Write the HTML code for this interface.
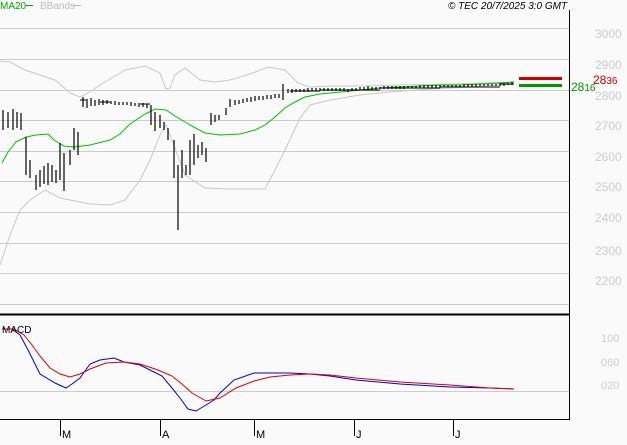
<!DOCTYPE html>
<html><head><meta charset="utf-8"><style>
body{margin:0;background:#fafafa;width:627px;height:440px;overflow:hidden;font-family:"Liberation Sans",sans-serif}
</style></head><body>
<svg width="627" height="440" xmlns="http://www.w3.org/2000/svg" font-family="Liberation Sans, sans-serif">
<rect width="627" height="440" fill="#fafafa"/>
<g stroke="#cccccc" stroke-width="1">
<line x1="0" y1="28.5" x2="569" y2="28.5"/><line x1="0" y1="59.5" x2="569" y2="59.5"/>
<line x1="0" y1="90.5" x2="569" y2="90.5"/><line x1="0" y1="120.5" x2="569" y2="120.5"/>
<line x1="0" y1="151.5" x2="569" y2="151.5"/><line x1="0" y1="181.5" x2="569" y2="181.5"/>
<line x1="0" y1="212.5" x2="569" y2="212.5"/><line x1="0" y1="243.5" x2="569" y2="243.5"/>
<line x1="0" y1="273.5" x2="569" y2="273.5"/><line x1="0" y1="304.5" x2="569" y2="304.5"/>
<line x1="0" y1="391.5" x2="569" y2="391.5"/>
</g>
<g fill="#cccccc" font-size="12">
<text x="595" y="38">3000</text><text x="595" y="69">2900</text><text x="595" y="100">2800</text>
<text x="595" y="130">2700</text><text x="595" y="161">2600</text><text x="595" y="191">2500</text>
<text x="595" y="222">2400</text><text x="595" y="255">2300</text><text x="595" y="285">2200</text>
<text x="601" y="342" font-size="11">100</text><text x="601" y="366" font-size="11">060</text><text x="601" y="389" font-size="11">020</text>
</g>
<polyline fill="none" stroke="#c8c8c8" points="0,61 10,62 25,70 40,75 55,80 70,93 80,97 90,92 100,85 110,79 125,70 145,66 160,73 166,89 170,88 175,75 185,68 200,80 215,82 230,80 250,74 268,67 285,70 298,83 310,87 330,86 360,86 400,85 450,84 514,82"/>
<polyline fill="none" stroke="#c8c8c8" points="0,265 10,235 20,210 30,200 45,190 60,198 70,200 90,204 110,205 125,200 140,180 150,160 160,135 166,125 172,140 185,175 205,188 230,189 265,189 275,170 285,150 300,118 310,105 330,100 360,95 390,92 430,89 470,87 514,84"/>
<polyline fill="none" stroke="#00c000" points="2,163 8,152 16,142 26,137 36,135 48,134 54,140 64,146 74,147 90,145 110,140 120,134 130,124 145,114 155,109 166,110 175,116 190,125 205,133 220,135 240,134 255,130 265,125 275,117 285,108 295,102 305,97 320,94 340,92 360,90 380,88 400,87 420,86 440,85 460,85 480,84 500,83 514,82"/>
<g stroke="#000" stroke-width="1.2">
<path d="M3,110V130M8,112V128M13,109V130M17,112V128M21,113V130M26,137V175M30,160V178M36,175V190M40,170V187M44,166V184M48,163V185M52,165V182M56,170V183M60,143V180M64,153V191M70,150V165M74,128V150M78,132V155"/>
<path d="M83,97V107M87,99V108M91,98V106M95,100V106M99,99V105M103,100V105M107,100V104M111,101V104M115,101V105M119,102V105M123,102V105M127,102V105M131,102V106M135,103V106M139,103V107M143,103V107M147,104V108M151,105V125M155,112V131M160,115V128M164,122V130M168,128V140M174,140V178M178,165V230M182,150V178M186,165V175M190,140V175M194,134V165M198,145V158M202,142V155M206,148V162"/>
<path d="M211,113V125M215,115V122M219,115V120M226,108V115M230,99V107M235,100V105M239,100V104M243,99V103M247,98V102M251,97V102M255,96V101M259,96V100M263,96V100M267,95V99M271,95V99M275,94V98M279,94V98M283,84V100M288,89V93M292,89V93M296,89V92M300,89V92M304,89V92M308,88V92M312,88V91M316,88V91M320,88V91M324,88V91M328,88V91M332,88V91M336,88V91M340,88V91M344,88V91M348,89V92M352,88V91M356,88V91M360,87V90M364,87V90M368,86V90M372,87V90M376,87V90M380,87V89M384,86V89M388,86V89M392,86V89M396,86V89M400,86V89M404,86V89M408,86V88M412,86V88M416,86V88M420,85V88M424,85V88M428,85V88M432,85V88M436,85V88M440,85V88M444,85V87M448,85V87M452,85V87M456,85V87M460,85V87M464,84V87M468,84V87M472,84V87M476,84V87M480,84V86M484,84V86M488,84V86M492,84V86M496,84V86M500,83V86M504,83V86M508,83V85M512,82V85"/>
<path d="M80,100H86M100,102H110M140,104H150M290,91H320M320,90H380M380,88H440M440,87H500M500,84H514" stroke-width="1"/>
</g>
<line x1="519" y1="78.5" x2="562" y2="78.5" stroke="#cc0000" stroke-width="3"/>
<line x1="519" y1="85.5" x2="562" y2="85.5" stroke="#009900" stroke-width="3"/>
<text x="571" y="91" font-size="12" fill="#009900">28<tspan font-size="10">16</tspan></text>
<text x="593" y="84" font-size="12" fill="#cc0000">28<tspan font-size="10">36</tspan></text>
<polyline fill="none" stroke="#0000dd" points="2,329 12,329 20,335 28,350 40,374 55,383 66,388 72,384 80,378 90,364 100,360 114,358 124,362 140,365 150,370 162,376 172,388 180,398 188,409 196,411 206,405 214,400 220,393 234,380 254,373 290,373 310,374 330,376 356,380 400,384 450,387 490,388 514,389"/>
<polyline fill="none" stroke="#dd0000" points="2,329 14,329 24,335 32,345 40,356 50,368 60,374 70,377 80,374 90,369 106,363 124,362 140,364 158,370 172,376 182,384 192,393 206,401 220,398 236,388 254,381 270,377 290,375 310,374 330,375 356,378 400,382 450,385 490,388 514,389"/>
<line x1="0" y1="314.5" x2="569" y2="314.5" stroke="#000" stroke-width="2"/>
<line x1="0" y1="419.5" x2="569" y2="419.5" stroke="#000"/>
<line x1="569.5" y1="10" x2="569.5" y2="420" stroke="#000"/>
<g stroke="#000"><line x1="60.5" y1="420" x2="60.5" y2="436"/><line x1="160.5" y1="420" x2="160.5" y2="436"/><line x1="254.5" y1="420" x2="254.5" y2="436"/><line x1="354.5" y1="420" x2="354.5" y2="436"/><line x1="453.5" y1="420" x2="453.5" y2="436"/></g>
<g font-size="11" fill="#000"><text x="62" y="438">M</text><text x="162" y="438">A</text><text x="256" y="438">M</text><text x="356" y="438">J</text><text x="455" y="438">J</text></g>
<text x="2" y="333" font-size="10" fill="#000">MACD</text>
<text x="0" y="9" font-size="10" fill="#00aa00">MA20</text><line x1="25" y1="5.5" x2="33" y2="5.5" stroke="#00aa00"/>
<text x="40" y="9" font-size="10" fill="#bbbbbb">BBands</text><line x1="73" y1="5.5" x2="81" y2="5.5" stroke="#bbbbbb"/>
<text x="448" y="9" font-size="10" font-style="italic" fill="#000">© TEC 20/7/2025 3:0 GMT</text>
</svg>
</body></html>
